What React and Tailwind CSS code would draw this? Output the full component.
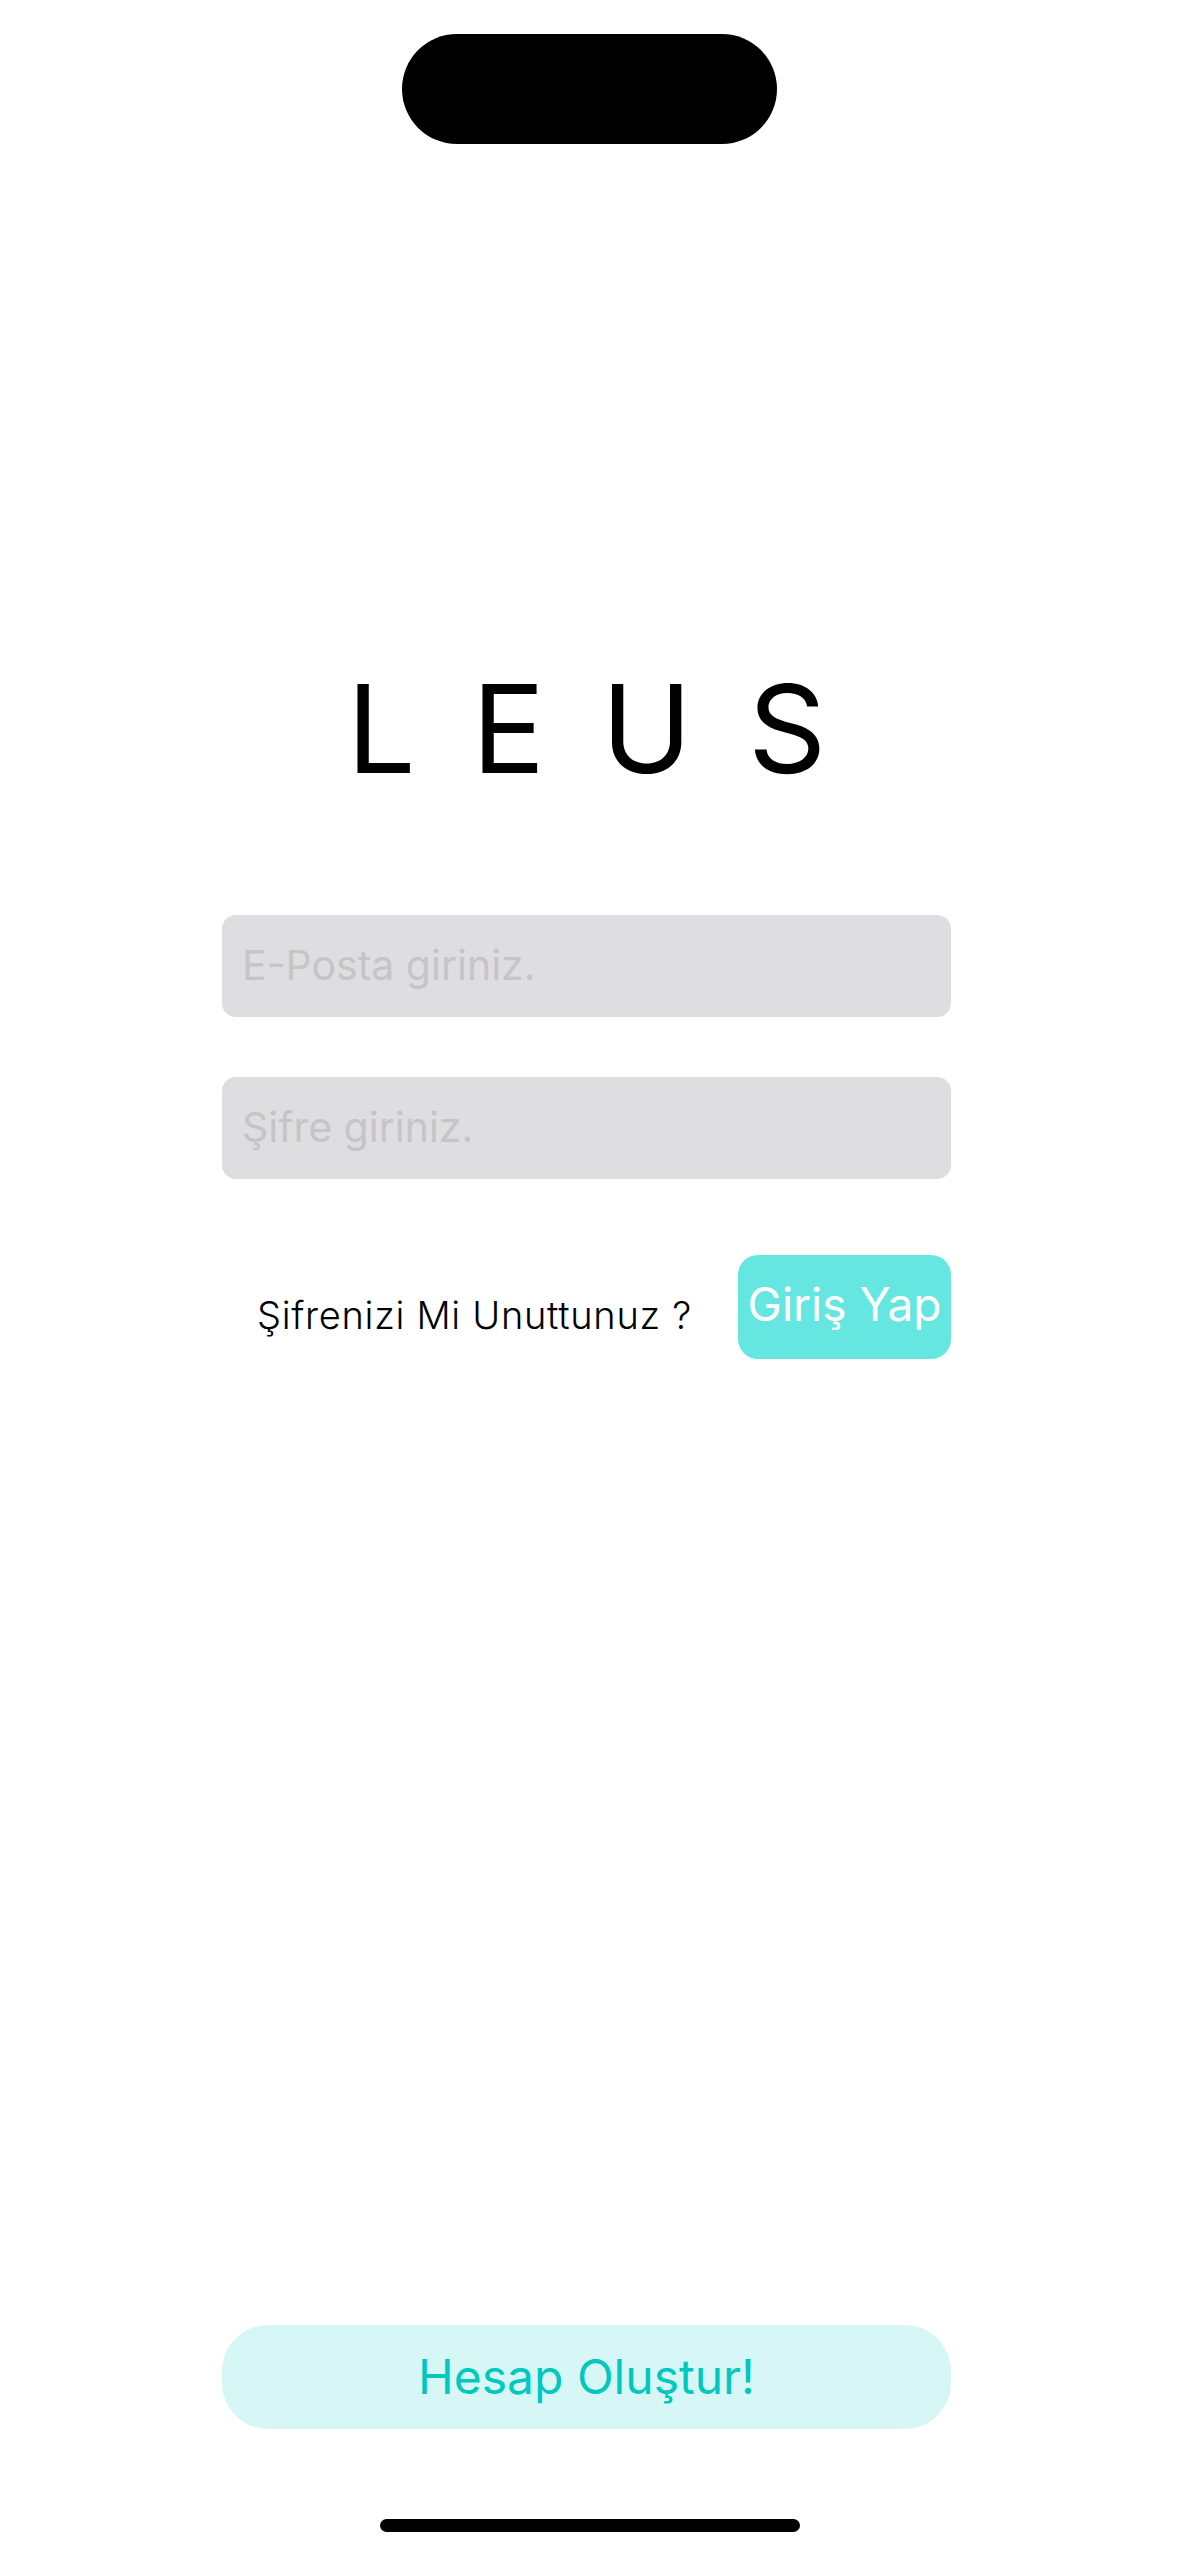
import React, { useState } from 'react';

// Login screen: logo, two inputs, forgot link + login button, register button at the bottom
const App = () => {
  const [email, setEmail] = useState('');
  const [password, setPassword] = useState('');

  return (
    <div className="w-[1179px] h-[2556px] bg-white flex flex-col font-['Inter',sans-serif] overflow-hidden">
      {/* dynamic island */}
      <div className="mx-auto mt-[34px] w-[375px] h-[110px] rounded-full bg-black" />

      {/* logo */}
      <div className="mt-[524px] ml-[222px] w-[729px] flex justify-center gap-[56px] text-[122px] leading-none font-normal text-black">
        <span>L</span>
        <span>E</span>
        <span>U</span>
        <span>S</span>
      </div>

      {/* form */}
      <div className="mt-[125px] ml-[222px] w-[729px] flex flex-col">
        <div className="h-[102px] rounded-[14px] bg-[#dedee0] pl-[20px] pr-4 flex items-center">
          <input
            type="email"
            value={email}
            onChange={(e) => setEmail(e.target.value)}
            placeholder="E-Posta giriniz."
            className="w-full bg-transparent outline-none text-[41px] text-black placeholder:text-[#c5c5c8]"
          />
        </div>
        <div className="mt-[60px] h-[102px] rounded-[14px] bg-[#dedee0] pl-[20px] pr-4 flex items-center">
          <input
            type="password"
            value={password}
            onChange={(e) => setPassword(e.target.value)}
            placeholder="Şifre giriniz."
            className="w-full bg-transparent outline-none text-[41px] text-black placeholder:text-[#c5c5c8]"
          />
        </div>

        <div className="mt-[76px] flex items-center">
          <span className="pl-[35px] mt-[16px] text-[38px] tracking-[0.7px] font-light text-black whitespace-nowrap">
            Şifrenizi Mi Unuttunuz ?
          </span>
          <button className="ml-auto w-[213px] h-[104px] rounded-[20px] bg-[#65e6e1] text-white text-[46px] flex items-center justify-center pb-[5px] whitespace-nowrap">
            Giriş Yap
          </button>
        </div>
      </div>

      <div className="flex-1" />

      {/* register */}
      <button className="ml-[222px] w-[729px] h-[104px] rounded-[46px] bg-[#d7f7f7] text-[#00c8be] text-[48px] flex items-center justify-center">
        Hesap Oluştur!
      </button>

      {/* home indicator */}
      <div className="mx-auto mt-[90px] mb-[24px] w-[420px] h-[13px] rounded-full bg-black" />
    </div>
  );
};

export default App;
